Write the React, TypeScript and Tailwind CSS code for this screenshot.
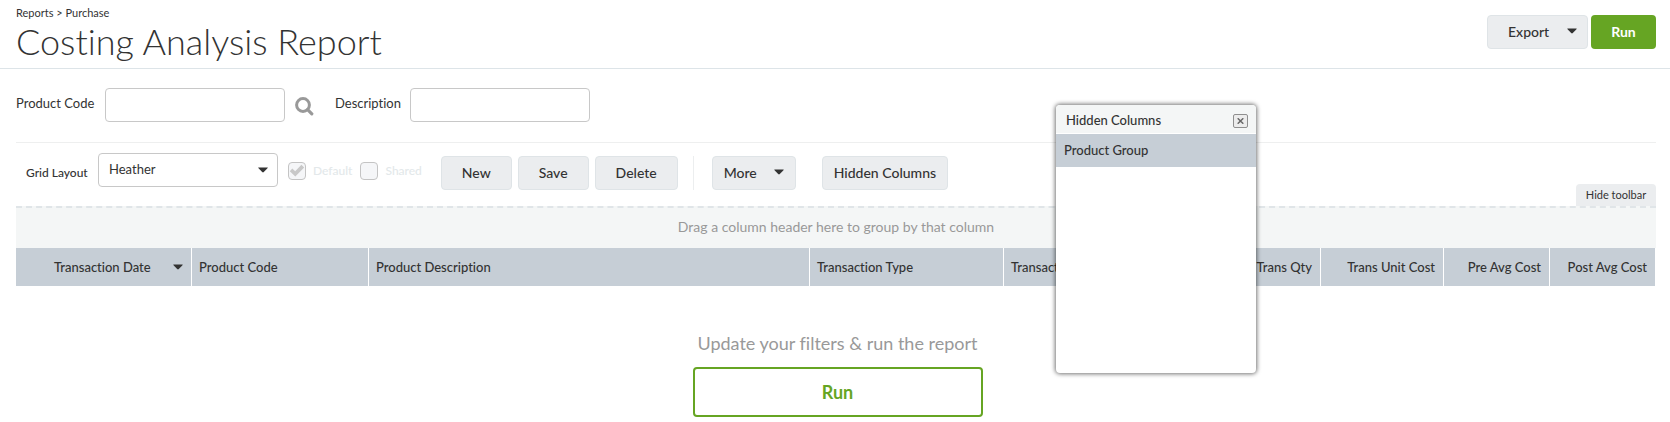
import type { ReactNode } from "react";
import { clsx } from "clsx";

function Caret({ className }: { className?: string }) {
  return (
    <svg viewBox="0 0 10 6" aria-hidden="true" className={clsx("pointer-events-none h-[6px] w-[10px] fill-[#333]", className)}>
      <path d="M0.6 0.4h8.8q.6 0 .3.5L5.8 5q-.8.8-1.6 0L.3.9Q0 .4.6.4z" />
    </svg>
  );
}

function Button({ className, children }: { className?: string; children: ReactNode }) {
  return (
    <button
      type="button"
      className={clsx(
        "flex h-[34px] shrink-0 items-center rounded border border-[#dfe4e7] bg-[#ebedef] pb-[2px] text-[14px] font-medium text-[#333]",
        className,
      )}
    >
      {children}
    </button>
  );
}

function DisabledCheck({ id, label, checked }: { id: string; label: string; checked: boolean }) {
  return (
    <div className="flex items-center gap-[7px]">
      <span className="relative block size-[18px]">
        <input
          id={id}
          type="checkbox"
          disabled
          defaultChecked={checked}
          className="block size-[18px] appearance-none rounded border border-[#c4c4c4] bg-[#f5f6f8]"
        />
        {checked && (
          <svg viewBox="0 0 18 18" aria-hidden="true" className="pointer-events-none absolute inset-0 size-[18px] fill-[#c8c8c8]">
            <path d="M1.8 9.2 4.3 6.6 7.2 9.2 13.4 2.8 16.2 5.5 7.3 14.6z" />
          </svg>
        )}
      </span>
      <label htmlFor={id} className="text-[12px] font-medium text-[#e3e8ea]">
        {label}
      </label>
    </div>
  );
}

const columns = [
  { title: "Transaction Date", width: "w-[176px]", sorted: true },
  { title: "Product Code", width: "w-[177px]" },
  { title: "Product Description", width: "" },
  { title: "Transaction Type", width: "w-[194px]" },
  { title: "Transaction No", width: "w-[194px]" },
  { title: "Trans Qty", width: "w-[123px]", numeric: true },
  { title: "Trans Unit Cost", width: "w-[123px]", numeric: true },
  { title: "Pre Avg Cost", width: "w-[106px]", numeric: true },
  { title: "Post Avg Cost", width: "w-[106px]", numeric: true },
];

const field = "h-[34px] w-[180px] rounded border border-[#c8c8c8] bg-white px-[10px] text-[13px] text-[#333]";

export default function App() {
  return (
    <div className="relative min-h-screen bg-white font-['Lato',sans-serif] text-[#333] [font-variant-ligatures:none]">
      <header className="flex items-start justify-between border-b border-[#dde4e8] pr-[14px] pl-4">
        <div className="pt-[5px] pb-[7px]">
          <nav aria-label="Breadcrumb" className="text-[11px] leading-4">
            <a href="#reports">Reports</a> &gt; <a href="#purchase">Purchase</a>
          </nav>
          <h1 className="text-[36px] leading-[40px] font-light">Costing Analysis Report</h1>
        </div>
        <div className="flex gap-[3px] pt-[15px]">
          <Button className="w-[101px] justify-between pr-[10px] pl-5">
            Export
            <Caret />
          </Button>
          <button type="button" className="h-[34px] w-[65px] rounded bg-[#66a523] pb-[2px] text-[14px] font-bold text-white">
            Run
          </button>
        </div>
      </header>

      <main className="pr-[14px] pl-4">
        <form className="flex items-start border-b border-[#eeefef] pt-[19px] pb-5" onSubmit={(e) => e.preventDefault()}>
          <label htmlFor="product-code" className="w-[89px] pt-[5px] text-[13px] leading-5">
            Product Code
          </label>
          <input id="product-code" type="text" className={field} />
          <button type="button" aria-label="Search products" className="mt-[9px] ml-[10px] block">
            <svg viewBox="0 0 19 19" aria-hidden="true" className="size-[19px] fill-none stroke-[#999]">
              <circle cx="8" cy="8" r="6.4" strokeWidth="3" />
              <path d="m12.6 12.6 4.2 4.2" strokeWidth="3.2" strokeLinecap="round" />
            </svg>
          </button>
          <label htmlFor="description" className="ml-[21px] w-[75px] pt-[5px] text-[13px] leading-5">
            Description
          </label>
          <input id="description" type="text" className={field} />
        </form>

        <section aria-label="Grid toolbar" className="flex items-start justify-between">
          <div className="flex items-start pt-[10px] pb-4 pl-[10px]">
            <label htmlFor="grid-layout" className="w-[72px] pt-[10px] text-[12px] leading-5 font-medium">
              Grid Layout
            </label>
            <div className="relative h-[34px]">
              <select id="grid-layout" className={clsx(field, "appearance-none")}>
                <option>Heather</option>
              </select>
              <Caret className="absolute top-[14px] right-[10px]" />
            </div>
            <div className="ml-[10px] flex gap-2 pt-[9px]">
              <DisabledCheck id="layout-default" label="Default" checked />
              <DisabledCheck id="layout-shared" label="Shared" checked={false} />
            </div>
            <div className="ml-[19px] flex gap-[6px] pt-[3px]">
              <Button className="px-5">New</Button>
              <Button className="px-5">Save</Button>
              <Button className="px-5">Delete</Button>
              <div className="mr-3 ml-[9px] h-[34px] w-px bg-[#eceeef]" />
              <Button className="w-[84px] justify-between px-[11px]">
                More
                <Caret />
              </Button>
              <Button className="ml-5 px-[11px]">Hidden Columns</Button>
            </div>
          </div>
          <button type="button" className="h-[22px] w-20 self-end rounded-t bg-[#ebedef] text-[11px] leading-5">
            Hide toolbar
          </button>
        </section>

        <div className="flex h-[42px] items-center justify-center border-t-2 border-dashed border-[#e0e5e8] bg-[#f4f6f6] pb-[3px] text-[14px] text-[#999]">
          Drag a column header here to group by that column
        </div>

        <table className="w-full table-fixed border-separate border-spacing-0">
          <thead>
            <tr className="h-[38px] bg-[#c6ced6]">
              {columns.map((c) => (
                <th
                  key={c.title}
                  scope="col"
                  aria-sort={c.sorted ? "descending" : undefined}
                  className={clsx(
                    "border-r border-white pr-2 pl-[7px] text-[13px] leading-5 font-medium whitespace-nowrap",
                    c.width,
                    c.numeric ? "text-right" : "text-left",
                  )}
                >
                  {c.sorted ? (
                    <span className="flex items-center justify-between pl-[31px]">
                      {c.title}
                      <Caret />
                    </span>
                  ) : (
                    c.title
                  )}
                </th>
              ))}
            </tr>
          </thead>
        </table>

        <div className="flex flex-col items-center pt-[45px] pl-[3px]">
          <p className="text-[18px] leading-6 text-[#999]">Update your filters &amp; run the report</p>
          <button
            type="button"
            className="mt-3 h-[50px] w-[290px] rounded border-2 border-[#66a523] bg-white text-[18px] font-bold text-[#66a523]"
          >
            Run
          </button>
        </div>
      </main>

      <aside
        aria-label="Hidden Columns"
        className="absolute top-[105px] right-[414px] h-[268px] w-[200px] overflow-hidden rounded bg-white text-[13px] font-medium shadow-[0_0_4px_1px_rgba(0,0,0,0.55)]"
      >
        <div className="flex h-[29px] items-center justify-between border-b border-white bg-[#f4f6f6] pt-[3px] pr-2 pl-[10px]">
          <h2>Hidden Columns</h2>
          <button
            type="button"
            aria-label="Close"
            className="flex h-[14px] w-[15px] items-center justify-center rounded-[2px] border border-[#8f8f8f] bg-[#ececec]"
          >
            <svg viewBox="0 0 7 6" aria-hidden="true" className="h-[6px] w-[7px] stroke-[#666]">
              <path d="M.7.3l5.6 5.4M6.3.3.7 5.7" strokeWidth="1.5" />
            </svg>
          </button>
        </div>
        <div className="flex h-[33px] items-center bg-[#c6ced6] px-2">Product Group</div>
      </aside>
    </div>
  );
}
